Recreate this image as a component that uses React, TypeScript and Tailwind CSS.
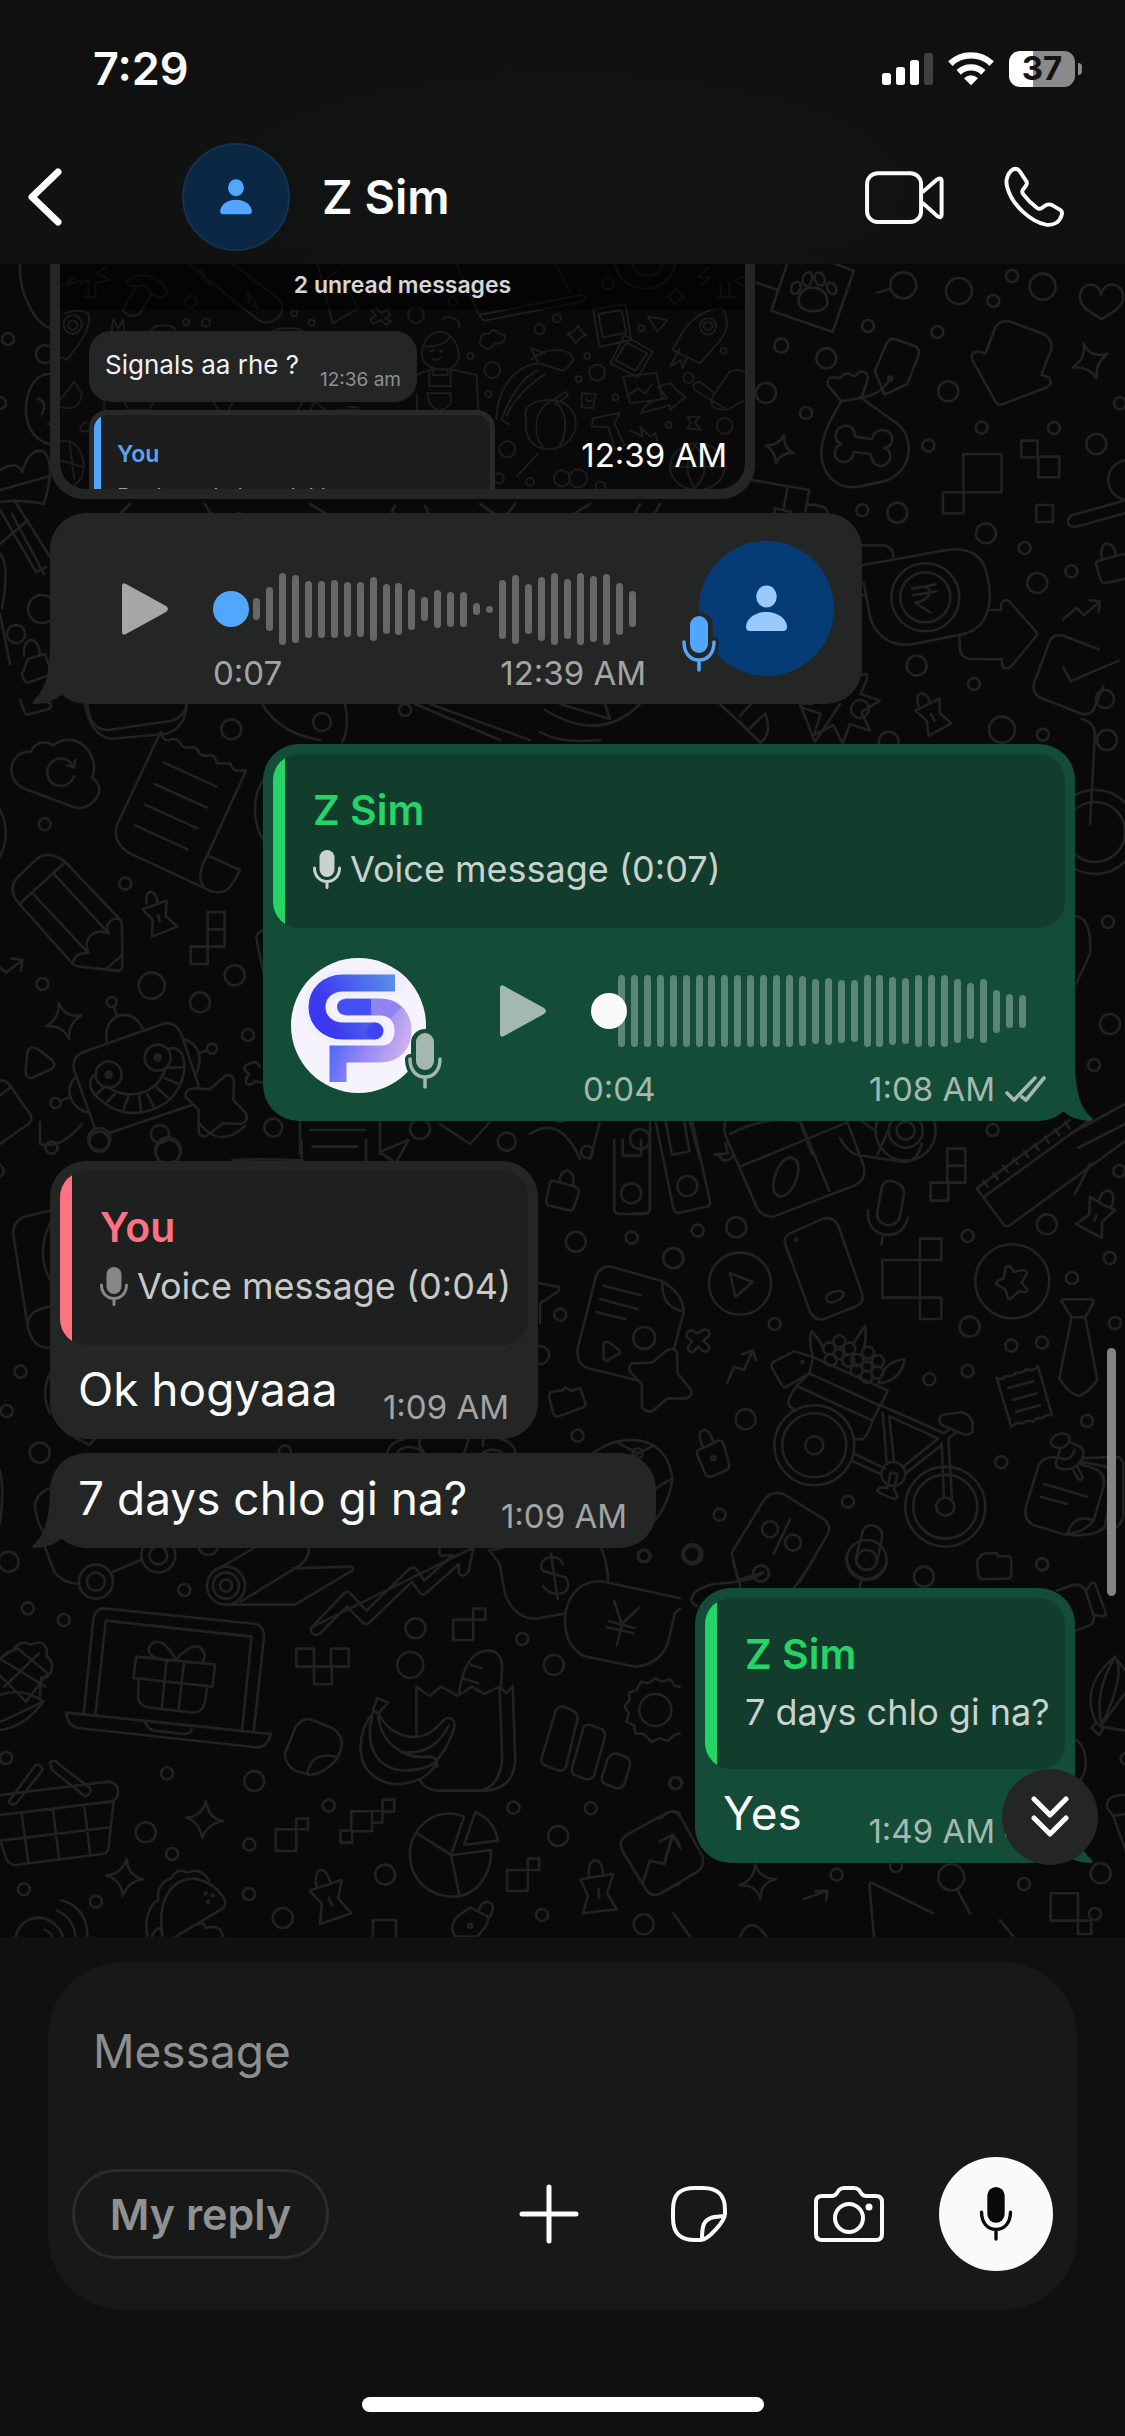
import React, { useState } from 'react';

type Dot = [number, number, number];

interface PatchData {
  x: number;
  y: number;
  sx: number;
  sy: number;
  dots: Dot[];
  paths: string[];
}

// Wallpaper doodles. Each patch has its own drawing grid, radii are in screen px.
const WALLPAPER: PatchData[] = [
  {
    x: 0, y: 700, sx: 0.3333, sy: 0.3333,
    dots: [
      [694, 88, 10], [134, 373, 6], [376, 551, 6], [127, 852, 6], [455, 857, 13], [704, 826, 10], [600, 907, 10],
      [335, 906, 5], [744, 1005, 6], [636, 1046, 5], [167, 1209, 5], [155, 1343, 6], [298, 1317, 11], [504, 1352, 13],
      [326, 1124, 13], [473, 1073, 13], [326, 1124, 3], [473, 1073, 3], [326, 1124, 1], [473, 1073, 1], [820, 1283, 9],
    ],
    paths: [
      'M78 268L222 322C262 334 306 292 296 258Q290 240 276 232C290 205 280 165 255 140C225 112 185 115 160 136C140 122 110 120 92 156C60 152 35 175 34 208C35 240 55 260 78 268Z',
      'M222 228A41 41 0 1 1 215 192M226 180L222 202L201 196',
      'M482 96L352 372Q335 425 385 458L630 572C680 590 695 560 720 510L622 466C590 520 595 560 632 574M622 466L738 212L720 212Q702 218 690 190Q668 192 650 188Q645 165 630 166Q608 172 598 158Q588 138 570 142Q548 148 538 125Q525 112 508 120Q490 125 482 96',
      'M492 188L650 260M464 252L621 323M435 314L592 385M406 376L563 448',
      'M58 612C30 580 32 550 60 525L112 475Q150 450 196 486L360 658Q366 665 366 680L367 800Q365 815 350 812L240 800Q220 798 212 785Z',
      'M58 612L196 486M98 580L266 760M162 522L326 700M218 790Q225 755 266 760C245 720 280 680 326 700C310 675 340 645 362 660M320 806L366 766',
      'M428 628L500 602L497 648L532 680L456 710L458 660ZM440 610C432 570 465 560 474 608M474 645L480 664',
      'M623 636h51v52h-51zM623 688h51v52h-51zM572 740h51v52h-51z',
      'M-10 792L18 818L68 780M34 776L68 780L62 812',
      'M176 908Q195 955 244 946Q205 970 207 1016Q188 975 137 979Q180 955 176 908Z',
      'M82 1058Q88 1035 112 1046L158 1082Q170 1098 152 1108L96 1134Q74 1136 77 1110Z',
      'M250 1056L495 970Q530 965 545 1005L597 1160M284 1283L222 1110Q215 1070 250 1056M325 1300L576 1215',
      'M320 1024C305 940 400 915 428 988M352 950L340 918M550 1017C595 1030 610 1070 590 1118M597 1060L622 1050M228 1132C190 1160 210 1225 264 1238M212 1192L182 1202',
      'M290 1120C255 1140 270 1180 310 1206C360 1250 440 1250 500 1206C545 1170 565 1110 545 1060Q530 1040 508 1046M320 1160C380 1200 470 1190 496 1105',
      'M288 1184L312 1162M316 1212L345 1182M368 1236L386 1186M424 1238L418 1188M462 1222L442 1182M502 1192L470 1162M536 1152L494 1134M552 1102L502 1103',
      'M590 1165L630 1168L675 1128Q702 1120 702 1145L700 1200L738 1240Q748 1268 720 1272L668 1270L620 1308Q596 1312 596 1290L596 1230L558 1192Q552 1165 590 1165Z',
      'M780 1100Q770 1080 752 1090Q725 1098 736 1112L748 1122Q735 1135 738 1150Q752 1160 765 1144L790 1148',
      'M-5 1145Q10 1135 25 1150L92 1245Q98 1262 85 1272L-5 1335M-5 1190L28 1165',
      'M262 10Q268 90 325 90L515 62Q555 50 560 10M60 0L75 40Q82 46 90 42L145 28Q156 22 152 10L110 0',
      'M-5 320Q40 400 -5 480M790 240C755 290 758 370 790 420M790 690Q765 700 770 720L790 815',
    ],
  },
  {
    x: 740, y: 260, sx: 0.3333, sy: 0.3333,
    dots: [
      [490, 76, 13], [657, 93, 13], [816, 48, 6], [760, 123, 6], [908, 80, 13], [384, 198, 6], [592, 216, 6], [124, 257, 7],
      [259, 295, 10], [78, 399, 10], [625, 394, 10], [198, 459, 6], [725, 503, 6], [942, 504, 6], [565, 557, 6], [1069, 552, 10],
      [1140, 430, 6], [367, 751, 6], [472, 758, 10], [738, 820, 10], [854, 864, 6], [994, 934, 6], [892, 969, 10],
      [530, 1217, 10], [702, 1272, 6], [786, 1409, 13], [909, 1424, 6], [1101, 1440, 10], [446, 1445, 10], [451, 356, 2],
      [556, 1012, 34], [556, 1012, 25], [1165, 660, 20],
    ],
    paths: [
      'M142 10L94 152L278 216L342 32L280 10M50 68L114 90',
      'M176 120C180 70 255 70 262 120C270 165 172 165 176 120Z',
      'M190 70C180 40 215 25 216 50C216 80 198 85 190 70ZM226 62C215 35 245 28 254 55C258 80 236 84 226 62ZM154 95C150 68 180 55 182 75C182 100 160 108 154 95ZM262 86C255 62 285 62 290 90C286 108 270 106 262 86Z',
      'M412 98L450 87',
      'M1085 178L1036 145C1000 110 1030 60 1068 78Q1082 88 1083 106Q1088 80 1108 74C1150 68 1165 120 1130 148Z',
      'M765 205Q778 178 808 184L905 220Q938 232 934 268L904 345Q935 350 932 368Q930 380 915 384L785 434Q772 436 766 424L698 302Q690 282 705 277Q720 272 736 282Z',
      'M1030 250Q1050 295 1102 282Q1065 310 1070 354Q1045 318 998 322Q1040 295 1030 250Z',
      'M440 250Q450 232 466 238L524 258Q540 266 536 284L502 372L434 404L404 334ZM362 412Q420 408 451 356',
      'M304 424L264 376Q258 350 285 352Q302 358 310 344Q325 335 336 346Q348 352 356 336Q385 330 383 360L364 414ZM304 424C270 480 242 530 244 590C252 655 300 690 358 680L440 662C520 630 525 530 470 490L364 414',
      'M346 530Q342 492 310 498C275 510 285 545 304 552C275 560 278 608 314 606Q338 602 342 576L392 582Q395 618 425 618C462 608 455 568 432 564C465 562 468 510 424 510Q400 514 396 538Z',
      'M132 525Q132 570 162 578Q118 580 108 610Q105 570 76 556Q112 560 132 525Z',
      'M670 582h115v115h-115zM609 697h62v63h-62zM844 542h49v50h-49zM895 590h63v62h-63zM889 735h50v51h-50z',
      'M35 660L208 690L196 755M142 684L130 750M206 734Q262 735 264 760M104 760V745L155 756',
      'M366 856H430Q462 860 460 896M366 916L620 870C700 858 735 900 742 950C760 1020 750 1110 660 1124L520 1152C440 1165 395 1110 388 1060Q375 985 370 968M366 1006H378',
      'M516 986L586 974M520 1006L590 994M550 980Q575 985 568 1002Q560 1022 525 1028L572 1058',
      'M752 1050H784Q780 1020 800 1020Q808 1022 815 1032L886 1112Q894 1122 886 1132L815 1218Q800 1232 790 1222Q784 1215 786 1198L690 1197Q660 1192 660 1165L658 1128',
      'M970 1078L1010 1043L1032 1066L1080 1024M1048 1020L1080 1024L1076 1056',
      'M1076 1168L965 1126Q942 1122 930 1142L882 1270Q876 1300 898 1312L1020 1360Q1048 1368 1060 1350L1090 1280M970 1222L992 1264L1136 1202',
      'M1160 720L995 766Q978 780 988 796Q995 802 1010 800L1160 758M1160 885L1150 882L1075 902Q1065 908 1070 920L1082 960Q1088 972 1105 968L1160 955M1086 895C1075 840 1120 835 1128 885',
      'M366 1245Q385 1235 380 1260L362 1302L420 1322L364 1356L390 1412L330 1392L308 1450L280 1396L222 1425L242 1362L180 1340Q185 1325 215 1332',
      'M526 1352L598 1316L600 1360L634 1390L566 1428L560 1382ZM536 1338C520 1298 552 1280 572 1330M572 1362L584 1382',
      'M0 1368L32 1334M0 1385L24 1410L76 1360Q98 1420 60 1450',
    ],
  },
  {
    x: 640, y: 1120, sx: 0.3333, sy: 0.3333,
    dots: [
      [173, 332, 6], [289, 322, 10], [100, 414, 10], [300, 491, 31], [404, 612, 6], [1058, 30, 6], [983, 348, 6],
      [1221, 313, 10], [1438, 153, 6], [1117, 484, 37], [1296, 474, 6], [1409, 414, 6], [1425, 609, 6], [989, 620, 10],
      [1114, 677, 6], [1206, 668, 6], [983, 753, 6], [868, 778, 6], [317, 898, 10], [1341, 903, 6], [1084, 1027, 6],
      [624, 1145, 6], [239, 1184, 6], [157, 1303, 10], [14, 1308, 6], [852, 1370, 10], [1206, 1333, 6], [142, 198, 10],
      [523, 976, 40], [523, 976, 32], [523, 976, 9], [916, 1160, 40], [916, 1160, 32], [916, 1160, 9], [760, 1062, 12],
      [390, 1228, 8], [459, 1268, 8], [363, 1360, 8], [797, 32, 17], [797, 32, 9], [797, 32, 30], [469, 359, 1],
      [487, 726, 1], [220, 1015, 2],
      [596, 703, 5], [568, 686, 6], [598, 664, 6], [628, 686, 6], [572, 720, 6], [625, 722, 6], [681, 740, 5], [652, 720, 6],
      [684, 698, 6], [714, 724, 6], [712, 758, 6], [680, 770, 6], [650, 752, 6],
    ],
    paths: [
      'M-20 280H15Q30 278 30 265V0M46 0L100 265Q103 280 118 278L200 260Q212 256 210 245L156 0M76 0L96 104L148 94L132 0',
      'M258 0Q248 25 258 50L345 250Q360 292 400 290L640 198Q680 182 672 140L620 0M300 140L620 8M480 0L568 212M256 70L264 100L224 104Q240 102 246 120Q270 125 278 108',
      'M400 190C410 130 445 95 470 122C490 160 450 240 415 228Q398 220 400 190ZM600 55Q630 105 660 106L790 126Q830 128 846 70M745 30L712 104M660 0L704 30',
      'M726 200Q738 175 765 186Q795 196 792 222L780 290Q770 318 740 315Q708 306 712 275ZM684 270C680 310 700 342 742 345Q790 345 804 293M728 346L724 373',
      'M455 338L550 296Q580 288 595 318L666 520Q674 545 650 558L555 596Q525 606 510 575L435 370Q430 348 455 338ZM560 540C550 520 600 505 610 518C616 535 570 560 560 540Z',
      'M270 460L338 486L286 531Z',
      'M922 86h54v51h-54zM922 137h54v51h-54zM872 188h53v54h-53zM727 420h113v113h-113zM840 356h64v64h-64zM840 533h64v64h-64z',
      'M1010 205L1290 0M1350 0L1030 232M1010 205L1092 315Q1100 322 1110 316L1460 60M1030 182L1043 200M1060 160L1073 178M1090 137L1103 155M1121 115L1134 133M1152 94L1165 112M1183 72L1196 90M1214 50L1227 68M1245 28L1258 46M1275 6L1288 24',
      'M1350 230L1390 255L1425 270L1386 306V354L1308 312L1348 284ZM1376 244C1390 190 1440 210 1412 264M1370 284L1362 302',
      'M1098 440Q1112 432 1120 455L1155 450Q1165 455 1158 466L1145 488L1164 510Q1162 520 1138 514L1120 528Q1110 542 1104 534L1096 508L1068 492Q1066 482 1090 476Z',
      'M1265 545Q1262 538 1275 538H1352Q1362 538 1360 548L1336 592H1295ZM1295 592L1258 775Q1285 820 1317 828Q1350 815 1372 778L1336 592',
      'M1070 774Q1090 782 1098 768Q1120 772 1128 758Q1145 762 1158 748Q1180 756 1194 738L1236 886Q1218 882 1208 894Q1190 892 1180 905Q1160 898 1150 910Q1130 905 1114 920ZM1105 804L1180 784M1118 840L1190 820M1128 876L1200 856',
      'M174 640Q188 630 194 628Q214 632 206 648L190 662L208 680Q210 696 190 694L174 680L158 698Q142 694 144 682L156 664L140 650Q138 630 158 632Z',
      'M261 790L282 740L312 750L338 692M306 703L338 692L349 722',
      'M172 992L235 962Q245 960 250 970L268 1035Q268 1045 260 1050L215 1070Q200 1072 195 1060L172 1005ZM188 978C160 925 205 910 218 962',
      'M518 710Q505 660 515 634Q545 665 550 690M640 672Q665 630 676 618Q680 660 670 690M715 790Q735 720 795 718Q780 785 715 790',
      'M395 742Q392 732 402 725L462 694L520 712L508 760L440 800Q430 805 425 795ZM520 712L744 812L698 902L470 798L508 760M508 760L722 858M470 798Q435 845 450 860L462 868M698 902Q680 955 665 958H645',
      'M722 856L912 940L932 926M898 900Q900 885 915 883L965 877Q995 885 998 910V935Q985 950 965 940L905 915ZM728 878L740 1024M748 890L762 1024M750 890L895 956L795 1036M905 975L800 1058M645 1002L735 1046M638 1024L722 1062M905 970L912 1132M925 955L936 1134M925 955L950 936',
      'M752 1058L742 1104Q712 1098 712 1112Q718 1122 765 1138Q780 1130 762 1110L772 1062Z',
      'M275 1298L372 1140Q395 1110 430 1122L555 1200Q575 1220 562 1245L480 1385M275 1298L296 1385M450 1198L402 1300M300 1378L370 1358',
      'M668 1235Q678 1210 705 1218Q730 1226 726 1255L710 1330Q700 1352 675 1349Q645 1342 648 1312ZM620 1305C618 1340 640 1372 680 1377Q725 1372 740 1328',
      'M1245 1012Q1205 1010 1195 1040L1158 1160Q1150 1200 1180 1215L1275 1244Q1330 1240 1362 1200L1392 1095Q1395 1055 1360 1045L1320 1032M1282 1242Q1300 1180 1362 1200M1320 1025L1400 1040Q1425 1060 1418 1090L1395 1220Q1370 1250 1290 1245M1330 1015L1430 1010Q1450 1015 1450 1035V1190Q1440 1230 1400 1225M1212 1092L1342 1130M1202 1130L1282 1152',
      'M1232 970C1235 940 1280 930 1290 955C1285 985 1250 995 1232 970ZM1262 985L1250 1020Q1240 1048 1275 1048C1320 1048 1345 1000 1320 980L1288 966M1256 1012Q1290 1030 1304 990M1296 1045L1314 1076Q1325 1085 1328 1072L1310 1035',
      'M1022 1310V1305L1040 1300H1070L1074 1310L1104 1308Q1114 1310 1114 1325V1365Q1112 1375 1102 1376L1030 1378Q1015 1376 1014 1362L1012 1325Q1012 1314 1022 1310Z',
    ],
  },
  {
    x: 0, y: 1140, sx: 0.4464, sy: 0.3333,
    dots: [
      [115, 23, 6], [222, 5, 10], [376, 35, 12], [46, 695, 6], [15, 813, 6], [89, 938, 10], [-5, 93, 6], [638, 935, 6],
      [1315, 36, 6], [1290, 305, 10], [1415, 293, 6], [1414, 160, 10], [1255, 524, 6], [1210, 645, 9], [1294, 887, 6],
      [1135, 5, 9], [1508, 355, 10], [1442, 1248, 6], [1550, 1243, 8], [1443, 594, 11], [1428, 940, 5],
    ],
    paths: [
      'M1376 0V205Q1376 222 1388 222H1445Q1456 220 1456 205V0M1395 0V47H1436V0',
      'M1240 122L1290 140Q1298 146 1296 160L1285 205Q1282 214 1272 210L1228 196Q1222 190 1224 176L1232 130Q1234 122 1240 122ZM1254 122C1255 80 1290 80 1284 136',
      'M1208 430L1250 440Q1256 446 1250 454L1210 490V550',
      'M1335 410Q1345 375 1370 380L1484 424Q1530 460 1532 515L1510 625M1484 424Q1480 500 1530 514M1335 410L1294 625Q1290 670 1315 684L1425 720M1352 437L1436 466M1344 477L1428 507M1336 516L1400 537M1352 610Q1360 600 1370 612L1388 632Q1392 640 1380 646L1360 662Q1350 660 1352 650Z',
      'M1420 670L1460 668L1495 630Q1516 620 1517 645L1518 700L1548 750Q1552 775 1530 776L1495 775L1460 815Q1436 815 1438 790V735L1410 692Q1408 670 1420 670Z',
      'M1232 756L1262 750L1266 742L1278 752L1300 745L1312 792Q1312 800 1300 805L1250 830Q1240 828 1238 815L1230 770Z',
      'M676 62V0M820 62V0M700 20H800M850 36L915 0L890 62M850 36L880 62M520 60Q600 55 680 62',
      'M868 935Q875 905 905 897M940 897V918L950 938M1082 897V918M1050 897L1040 938M1155 938Q1150 905 1120 897M890 938A30 28 0 0 1 945 938M1082 938A30 28 0 0 1 1125 938M1330 938C1400 870 1500 890 1506 1020C1500 1080 1480 1120 1468 1140M1428 940L1380 905M1428 940L1460 920M1428 940L1400 990M1468 1046L1500 1020',
      'M112 212L60 228Q28 240 30 285L62 560Q75 630 112 622M112 500Q60 510 62 560M112 250Q80 340 112 420M112 700Q90 760 112 820M150 880L200 915L212 897',
      'M0 990Q10 1050 0 1150M78 1100Q80 1060 112 1045M78 1100Q85 1160 100 1180',
    ],
  },
  {
    x: 0, y: 1540, sx: 0.4337, sy: 0.3333,
    dots: [
      [20, 65, 10], [64, 205, 6], [147, 240, 6], [425, 150, 6], [221, 125, 17], [221, 125, 9], [365, 46, 17], [365, 46, 9],
      [521, 137, 19], [521, 137, 13], [521, 137, 6], [958, 265, 10], [946, 375, 13], [1204, 297, 6], [1277, 375, 10],
      [1484, 48, 6], [14, 654, 6], [385, 700, 6], [586, 723, 10], [758, 797, 6], [336, 877, 10], [397, 942, 6],
      [575, 914, 6], [888, 1004, 10], [574, 1062, 6], [652, 1134, 10], [221, 1085, 6], [55, 1048, 6], [1184, 803, 6],
      [1362, 805, 6], [1287, 888, 10], [1250, 1125, 6], [1484, 1153, 10], [1557, 730, 6], [1511, 510, 16], [480, 15, 10],
      [474, 1060, 1], [490, 1066, 1], [480, 1085, 1], [1084, 1158, 2],
    ],
    paths: [
      'M103 20L125 95Q145 130 180 131M256 98L325 60',
      'M515 78L588 22M712 22Q715 60 680 85L555 185M676 85L808 80Q818 82 812 92L680 194H522',
      'M718 262L795 158Q802 150 808 160L845 212L945 85Q955 78 962 90L978 122L1044 45L1018 48Q1008 40 1015 22M1092 22L1080 95Q1070 115 1058 100L1058 72L982 160Q975 168 968 158L950 125L850 250Q845 256 838 250L800 200L738 280Q728 290 720 280Q714 272 718 262Z',
      'M1128 30L1152 72L1164 160Q1185 235 1235 236L1305 220M1385 22Q1400 60 1402 122M1130 30L1160 24M1270 40L1286 178M1298 72Q1290 45 1262 54Q1240 70 1252 92Q1290 108 1304 112Q1318 140 1300 158Q1270 170 1252 138',
      'M1568 175L1385 123Q1320 125 1304 215Q1295 310 1345 348L1465 380Q1520 375 1540 310L1556 220L1568 205M1416 184L1434 252L1474 202M1434 252L1422 316M1404 244L1464 264M1400 262L1460 280',
      'M193 522L215 240Q220 200 245 206L590 252Q612 260 608 300L585 574M220 524L244 242L580 290L558 572',
      'M153 518L625 582Q615 625 590 622L185 565Q155 560 153 518ZM335 550Q345 570 355 572L425 582Q440 580 442 566',
      'M314 350L496 374L490 440L308 414ZM384 362L373 504M424 368L412 508M320 416L318 470Q320 495 340 502L445 518Q465 518 472 490L478 440M405 360Q350 365 342 330Q350 295 375 310Q395 330 405 360Q440 310 460 322Q480 340 466 368',
      'M683 326h41v54h-41zM763 326h41v54h-41zM724 380h41v53h-41zM1045 239h46v62h-46zM1091 206h28v33h-28z',
      'M636 868h47v65h-47zM683 836h27v32h-27zM810 814h48v60h-48zM882 779h27v36h-27zM858 814h24v34h-24zM785 872h27v36h-27zM1169 990h48v63h-48zM1217 956h26v34h-26zM860 1190V1140h53v50',
      'M-5 360L30 330Q50 295 70 315Q100 295 108 330V350Q125 365 118 395Q108 420 95 412L92 470M0 360Q15 330 36 330M-5 400L60 485M5 360L105 440M40 325L110 400M60 485L110 400M10 440L90 340M0 570Q60 560 100 484Q50 440 0 465M0 545Q30 530 100 484',
      'M682 560Q700 530 720 540L768 565Q792 590 788 620L778 655Q750 700 715 705L680 692Q655 670 657 640ZM708 700Q720 630 778 652',
      'M960 585V440L990 468L1018 440L1055 468L1088 440L1116 462L1152 440L1168 460L1182 438L1188 660Q1185 745 1120 752H1010Q980 750 968 720M1152 440L1158 660Q1150 740 1110 752M1058 462Q1070 350 1110 335Q1155 320 1158 380L1155 442M1085 374L1110 385M1070 416L1102 430',
      'M870 474L895 488L872 520L860 512ZM862 515C820 580 820 680 870 715C920 755 990 720 1008 665M872 520C900 590 960 610 1000 570Q1020 545 1028 535Q1050 530 1048 560Q1035 620 1005 665M858 530C840 620 870 690 935 692Q980 690 1002 668M872 530C880 610 930 660 990 650Q1010 650 1008 680M925 635Q1000 650 1035 555',
      'M1282 510Q1290 495 1305 502L1325 515Q1335 525 1330 545L1305 680Q1300 695 1288 692L1255 675Q1245 668 1250 650ZM1346 560Q1355 550 1368 558L1388 568Q1398 580 1394 595L1370 705Q1365 720 1350 718L1325 705Q1315 698 1320 680ZM1402 655Q1410 638 1425 642L1445 652Q1455 662 1452 680L1440 730Q1432 748 1420 744L1395 732Q1385 722 1388 710Z',
      'M1511 415L1525 425L1545 418L1556 438L1568 440M1511 415L1495 430L1478 425L1468 450L1450 458L1452 480L1440 498L1450 520L1444 545L1462 555L1465 580L1484 582L1502 606L1520 595L1540 602L1555 585L1568 580',
      'M82 675Q95 670 98 690L38 790Q28 800 20 785ZM115 668Q125 655 135 672L208 745Q212 765 195 768L120 690ZM0 765L250 725Q275 730 272 760Q270 780 255 785L0 825M262 785L250 925Q248 942 235 942L35 975Q20 975 14 955L0 900M0 902L255 862M50 820L65 965M122 808L136 955M194 795L208 945',
      'M475 783Q480 835 514 843Q480 850 466 894Q460 845 430 833Q465 830 475 783ZM292 956Q295 1008 330 1018Q295 1025 283 1068Q280 1020 245 1006Q282 1002 292 956Z',
      'M1070 830L1040 945L964 882M1070 830C1010 800 950 850 945 940C945 1020 990 1072 1050 1070C1100 1065 1135 1000 1132 930L1040 946L1060 1070M1096 816L1070 915L1148 902Q1140 840 1096 816Z',
      'M714 1052L788 1020L780 1075L810 1120L738 1152L742 1092ZM730 1042C720 980 752 970 762 1030M758 1074L765 1096M1338 1018L1414 1002L1400 1060L1422 1108L1344 1120L1356 1068ZM1358 1012C1352 945 1392 945 1390 1006M1380 1048L1382 1074',
      'M375 1190C360 1070 400 1015 450 1016Q500 1030 520 1085Q520 1100 508 1110L405 1190M375 1190Q368 1140 350 1190M340 1190C330 1130 350 1090 365 1080Q360 1030 395 1015Q410 980 430 998Q465 980 482 1022M455 1155Q470 1140 474 1165Q510 1150 514 1190',
      'M36 1190C50 1115 125 1115 145 1190M103 1170Q115 1175 122 1190M132 1112Q170 1135 174 1190M140 1080Q200 1100 202 1190',
      'M1045 1150Q1048 1135 1060 1125L1085 1102L1125 1130Q1130 1150 1100 1190H1050Q1038 1170 1045 1150ZM1105 1108Q1110 1085 1125 1085Q1145 1095 1130 1130',
      'M1568 820Q1550 808 1535 820L1445 885Q1425 900 1434 930L1490 1050Q1500 1070 1520 1062L1568 1030M1482 1030L1498 962L1532 972L1552 884M1520 906L1552 884L1566 910',
    ],
  },
  {
    x: 660, y: 1560, sx: 0.3333, sy: 0.3333,
    dots: [
      [792, 50, 10], [1147, 14, 6], [303, 41, 8], [48, 669, 6], [530, 944, 6], [708, 918, 6], [874, 952, 13], [1092, 972, 6],
      [1322, 940, 10], [620, 0, 10], [620, 0, 20], [1400, 596, 6],
    ],
    paths: [
      'M218 0L242 84M460 0L402 84M303 41Q280 65 160 72Q90 90 95 125Q100 135 112 138M604 62L598 84',
      'M1190 92L1240 74Q1270 72 1278 95L1302 170Q1302 190 1290 196L1248 212M1276 95L1295 68L1305 70L1338 160Q1335 170 1325 168L1302 165',
      'M1365 290C1290 350 1275 420 1310 490L1325 500L1395 512M1365 290L1395 330M1365 290C1320 370 1310 430 1325 495M1395 400L1325 495M1365 290Q1400 340 1325 495M1310 485L1295 505L1318 525L1332 502M1248 538C1285 570 1285 630 1260 662',
      'M1395 705Q1335 705 1342 745L1360 768L1400 880M1360 768L1395 762',
      'M0 775L28 756Q45 752 60 768L128 890Q135 920 112 935L0 1002M0 910L12 912L38 825L10 838M38 825L62 865',
      'M285 912Q298 955 348 958Q300 968 302 1018Q290 975 238 976Q285 958 285 912ZM430 1018L498 994M466 994L502 992L498 1020M642 1130L628 975Q632 965 642 972L820 1060M892 990L930 1060M1172 1000h82v82h-82zM1254 1082h40v40h-40zM40 1060L90 1130M240 1130Q270 1060 320 1130M1020 1080L1060 1130',
    ],
  },
  {
    x: 0, y: 264, sx: 1, sy: 1,
    dots: [
      [8, 75, 6], [45, 90, 9], [0, 139, 6], [16, 370, 9], [42, 345, 14], [1095, 568, 42], [1095, 568, 30], [1108, 658, 6],
      [1110, 760, 10], [1094, 801, 6], [322, 458, 9], [405, 446, 6], [860, 445, 9], [1105, 435, 9], [640, 875, 10], [160, 870, 9],
      [420, 865, 10], [560, 852, 6], [1095, 1650, 6],
    ],
    paths: [
      'M20 0C18 30 36 60 50 64M50 110C30 110 20 140 30 165Q38 178 50 180M38 135Q48 138 42 150M0 206Q18 196 22 208Q30 182 44 188Q56 200 44 240Q20 235 0 238M0 226L50 212M48 160Q60 158 66 168',
      'M0 246L36 308L46 303M14 236L52 296M0 280L28 256M12 250L44 310M130 240L120 250M205 240Q215 262 240 249M310 240L330 252M395 242A18 16 0 1 0 425 242M480 240L495 250M515 240L508 249M590 240L575 249M640 240L635 249M660 240L655 249',
      'M0 290Q10 300 2 344M28 395L45 390L52 410L30 418Q24 420 22 410ZM24 392C22 372 38 370 40 390M0 350L10 400',
      'M85 440Q90 470 110 475L165 470Q185 465 187 440M262 440Q280 470 320 476M345 440Q350 465 342 478M415 440L500 476M430 440L530 476M560 440L610 455L605 440M545 446Q600 480 640 440M720 440L760 478M840 440L815 478L800 440',
      'M1082 455Q1094 458 1095 470L1090 560M1076 652Q1092 655 1090 690L1076 720M1125 860L1078 884M1125 840L1070 870M1090 900L1075 930',
      'M540 468Q560 480 600 476M300 856V890M380 856V890M310 866H365M440 860L470 880L490 858M200 860Q220 885 245 862M600 858L590 895M530 870Q560 850 580 895M690 858L700 895M40 858V880Q60 886 82 860M730 870Q770 850 800 858L812 890',
    ],
  },
];

const SHOT_PATHS = [
  'M121 80L150 50L135 75L165 60M178 112V60L160 72M165 112H192M192 112V70L222 60L195 40L215 20M285 45C240 60 250 90 290 75C310 95 300 115 330 110C350 90 320 50 285 45ZM275 78L248 150Q260 180 282 160L305 100',
  'M380 12L520 180Q545 200 565 165Q575 140 560 115L470 12M405 25L425 75L408 60ZM498 95L520 145L502 130ZM640 12L670 190L722 145L690 60M640 80L680 30',
  'M965 165L1170 105Q1185 110 1175 125L975 182ZM965 165L920 12M1150 100L1120 12M1240 12C1250 110 1350 110 1360 12M1275 12C1280 60 1330 60 1335 12M1410 75L1430 55L1405 50L1430 20M1452 110V65M1470 110V65M1440 112H1485M1500 80L1480 60L1500 50',
  'M130 160Q160 145 178 160Q185 190 165 240L135 300L121 290M146 165A18 28 0 1 0 147 165M146 182A9 14 0 1 0 147 182M225 212L228 178L238 205L248 178L250 212M305 212C310 190 350 190 355 212M550 212C570 200 600 205 610 212',
  'M748 150L760 145L768 160L780 148L786 165L776 175L788 185L778 195L766 180L752 192L746 178L758 168Z',
  'M1195 148L1260 132L1272 240L1208 260ZM1206 162L1252 150L1262 218L1214 232ZM1258 225L1315 275L1285 352L1230 310ZM1262 248L1304 280L1280 332L1240 300ZM1305 170L1345 180L1325 215Z',
  'M1165 195Q1170 220 1182 225Q1166 232 1160 250Q1155 230 1142 222Q1160 215 1165 195ZM1362 82Q1366 105 1380 112Q1364 118 1360 136Q1354 115 1342 110Q1358 105 1362 82Z',
  'M1370 230Q1400 150 1455 145Q1480 200 1440 260L1410 310L1355 270ZM1426 175A16 24 0 1 0 1427 175M1426 186A9 12 0 1 0 1427 186M1370 265L1350 320L1372 300L1375 325L1385 290',
  'M850 290C850 190 920 190 925 290Q920 330 888 330Q855 320 850 290ZM890 180C900 160 930 175 925 205M855 260Q900 260 908 225M866 275L875 270M885 272L893 275M870 295Q880 305 890 290M872 328V345H902V328M838 345L868 328L908 328L960 345L964 450M865 328V378H908V328M860 400H908V430Q885 470 866 430ZM840 400V450',
  'M968 240Q970 215 985 222Q995 200 1005 222Q1022 222 1016 240Q1010 255 998 250Q985 275 975 262Q965 255 968 240ZM1070 300C1100 260 1150 260 1155 300C1130 350 1140 330 1085 310L1070 265L1100 280M1085 310C1030 320 1000 400 1000 480M1085 330Q1040 360 1010 480L1028 495M1100 340Q1040 400 1020 470',
  'M1060 480C1050 430 1090 410 1130 425C1170 450 1170 530 1130 560C1080 585 1055 540 1060 480ZM1108 425C1070 460 1075 540 1100 570M1120 425C1150 470 1140 540 1120 570M1110 425L1140 395L1145 405L1118 435M1085 580Q1060 620 1040 650',
  'M1255 350L1322 338L1335 418L1270 430ZM1262 410L1285 385L1300 400L1315 372M1325 380L1350 370L1380 412L1350 450V435L1292 460Q1300 420 1345 415ZM1400 390Q1390 370 1410 365L1440 400L1470 335Q1500 325 1500 340M1400 390L1465 450L1500 420M1440 400Q1420 450 1460 448',
  'M1172 400L1200 402L1195 445L1172 442ZM1180 415L1185 425L1195 420M1195 475L1250 458L1238 490L1258 555L1240 570L1225 500L1192 500ZM1268 510L1295 530L1290 500L1310 530L1320 520L1325 545M1385 470L1410 470L1400 488L1412 510L1385 505L1392 488Z',
  'M1350 620A55 70 0 1 0 1460 620A55 70 0 1 0 1350 620M1400 555Q1370 620 1400 685M1400 555Q1440 620 1400 685M1350 620H1460',
  'M121 440Q160 460 165 400L150 365L121 420M121 545C160 530 175 600 165 650Q150 690 121 685M121 600L165 620M140 545L150 660M175 485Q155 500 165 515L190 510M210 425V450M250 425L260 450H300L310 425M430 425L440 450M470 425L460 450M600 450L610 425M625 450L635 425L655 450M680 450H720Q730 440 700 440',
];
const SHOT_DOTS: Dot[] = [
  [385, 125, 6], [593, 160, 3], [375, 187, 3], [415, 188, 4], [628, 188, 3], [838, 165, 8], [912, 124, 4], [1225, 70, 6],
  [1122, 175, 4], [1087, 208, 5], [1292, 205, 3], [948, 288, 3], [992, 330, 8], [1183, 288, 3], [1166, 357, 3], [1203, 338, 8],
  [1387, 353, 5], [1458, 272, 3], [984, 402, 3], [1240, 412, 3], [1347, 495, 3], [1460, 497, 8], [1022, 568, 8],
  [1068, 665, 4], [1132, 655, 8], [1005, 655, 5], [1165, 655, 9], [1210, 680, 5],
];

// bar heights in px
const WAVE_IN = [22, 44, 72, 68, 57, 57, 58, 55, 55, 64, 50, 52, 41, 24, 38, 35, 35, 12, 7, 59, 69, 50, 64, 72, 60, 72, 66, 71, 52, 36];
const WAVE_OUT = [72, 72, 72, 72, 72, 72, 72, 72, 72, 72, 72, 72, 72, 72, 70, 65, 67, 63, 62, 72, 72, 68, 66, 72, 72, 72, 64, 56, 64, 43, 34, 33];

function Doodles() {
  return (
    <svg
      aria-hidden="true"
      viewBox="0 264 1125 1673"
      preserveAspectRatio="xMidYMin slice"
      className="absolute inset-0 h-full w-full fill-none stroke-[#222222] [&_*]:[vector-effect:non-scaling-stroke]"
      strokeWidth="2.6"
      strokeLinecap="round"
      strokeLinejoin="round"
    >
      {WALLPAPER.map((p, i) => (
        <g key={i} transform={`translate(${p.x} ${p.y}) scale(${p.sx} ${p.sy})`}>
          {p.paths.map((d, j) => <path key={j} d={d} />)}
          {p.dots.map(([cx, cy, r], j) => <ellipse key={j} cx={cx} cy={cy} rx={r / p.sx} ry={r / p.sy} />)}
        </g>
      ))}
    </svg>
  );
}

function Person({ className }: { className: string }) {
  return (
    <svg viewBox="0 0 135 135" className={className} fill="currentColor" aria-hidden="true">
      <ellipse cx="67.5" cy="55.5" rx="10.3" ry="11" />
      <path d="M47 86C47 78 56 71 67.5 71S88 78 88 86Q88 90 84 90H51Q47 90 47 86Z" />
    </svg>
  );
}

function Mic({ className, halo = '' }: { className: string; halo?: string }) {
  return (
    <svg viewBox="0 0 34 56" className={`overflow-visible ${className}`} fill="none" strokeLinecap="round" aria-hidden="true">
      {halo && (
        <g className={halo} strokeWidth="10">
          <rect x="8" y="1" width="18" height="36" rx="9" />
          <path d="M2 26C2 37 8 44 17 44S32 37 32 26" />
        </g>
      )}
      <rect x="8" y="0" width="18" height="37" rx="9" fill="currentColor" />
      <path d="M2 26C2 37 8 44 17 44S32 37 32 26M17 44V54" stroke="currentColor" strokeWidth="3.5" />
    </svg>
  );
}

function SmallMic({ className }: { className: string }) {
  return (
    <svg viewBox="0 0 28 39" className={`h-[39px] w-7 shrink-0 ${className}`} fill="none" strokeLinecap="round" aria-hidden="true">
      <rect x="6.5" y="0" width="15" height="27" rx="7.5" fill="currentColor" />
      <path d="M1.5 18C1.5 26 7 31.5 14 31.5S26.5 26 26.5 18M14 31.5V37.5" stroke="currentColor" strokeWidth="3" />
    </svg>
  );
}

function Ticks() {
  return (
    <svg viewBox="0 0 41 27" className="h-[27px] w-[41px] shrink-0" fill="none" stroke="currentColor" strokeWidth="3.6" strokeLinecap="round" strokeLinejoin="round" aria-label="Delivered">
      <path d="M2 17L9 24L30 2M17 21L21 24L39 2" />
    </svg>
  );
}

function Tail({ side }: { side: 'left' | 'right' }) {
  return (
    <svg
      viewBox="0 0 40 64"
      aria-hidden="true"
      className={side === 'left'
        ? 'absolute bottom-0 -left-[18px] h-16 w-10 fill-[#242626]'
        : 'absolute bottom-0 -right-[18px] h-16 w-10 -scale-x-100 fill-[#144d37]'}
    >
      <path d="M18 0C18 32 14 50 1 61Q-1 64 4 64Q20 63 29 55L40 50V0Z" />
    </svg>
  );
}

function PlayButton({ className }: { className: string }) {
  return (
    <button type="button" aria-label="Play voice message" className={className}>
      <svg viewBox="0 0 46 52" className="h-[52px] w-[46px]" fill="currentColor">
        <path d="M0 3Q0 -1 4 1L44 23Q48 26 44 29L4 51Q0 53 0 49Z" />
      </svg>
    </button>
  );
}

function Waveform({ bars, className, barClass, thumbClass }: { bars: number[]; className: string; barClass: string; thumbClass: string }) {
  const [pos, setPos] = useState(0);
  return (
    <div className={`relative h-[76px] ${className}`}>
      <div className="flex h-full items-center justify-between">
        {bars.map((h, i) => <span key={i} className={`w-[7px] rounded-full ${barClass}`} style={{ height: h }} />)}
      </div>
      <input
        type="range"
        aria-label="Playback position"
        min={0}
        max={100}
        value={pos}
        onChange={e => setPos(Number(e.target.value))}
        className={`absolute inset-0 h-full w-full appearance-none bg-transparent [&::-webkit-slider-thumb]:size-9 [&::-webkit-slider-thumb]:appearance-none [&::-webkit-slider-thumb]:rounded-full ${thumbClass}`}
      />
    </div>
  );
}

function Time({ children, className = 'text-[#a3a4a4]' }: { children: React.ReactNode; className?: string }) {
  return <span className={`flex items-center gap-[10px] text-[33px] leading-[44px] whitespace-nowrap ${className}`}>{children}</span>;
}

function Quote({ name, text, voice = false, tone }: { name: string; text: string; voice?: boolean; tone: 'green' | 'pink' }) {
  const green = tone === 'green';
  return (
    <blockquote className={`overflow-hidden rounded-[26px] ${green ? 'bg-[#123c2c]' : 'bg-[#1e201f]'}`}>
      <div className={`border-l-[12px] pt-[27px] pb-7 pl-7 ${green ? 'border-[#25d366]' : 'border-[#ff7282]'}`}>
        <p className={`text-[41px] leading-[58px] font-semibold ${green ? 'text-[#25d366]' : 'text-[#ff7282]'}`}>{name}</p>
        <p className={`flex items-center gap-[9px] text-[36px] whitespace-nowrap ${voice ? 'leading-[61px]' : 'leading-[58px]'} ${green ? 'text-[#c8d2ce]' : 'text-[#c8c9c8]'}`}>
          {voice && <SmallMic className={green ? '' : 'text-[#868887]'} />}
          {text}
        </p>
      </div>
    </blockquote>
  );
}

function StatusBar() {
  return (
    <div className="flex h-[138px] items-center justify-between pr-[43px] pl-[93px]">
      <time className="text-[45px] font-semibold">7:29</time>
      <div className="flex items-center">
        <svg viewBox="111 39 153 96" className="h-8 w-[51px]" fill="#fff" aria-label="Signal">
          <rect x="111" y="99" width="27" height="36" rx="8" />
          <rect x="153" y="81" width="27" height="54" rx="8" />
          <rect x="195" y="60" width="27" height="75" rx="8" />
          <rect x="237" y="39" width="27" height="96" rx="8" fill="#404040" />
        </svg>
        <svg viewBox="309 35 138 102" className="ml-[15px] h-[34px] w-[46px]" fill="none" stroke="#fff" strokeWidth="19" aria-label="Wi-Fi">
          <path d="M316 70A90 90 0 0 1 440 70M341 96A54 54 0 0 1 415 96" />
          <path d="M378 135L357 114Q378 95 399 114Z" fill="#fff" stroke="none" />
        </svg>
        <span className="ml-[15px] flex h-9 w-[66px] items-center justify-center rounded-[11px] bg-[linear-gradient(90deg,#fff_36%,#8a8a8a_36%)] text-[33px] font-bold text-[#141414]">37</span>
        <span className="ml-[3px] h-3 w-1 rounded-r-full bg-[#8a8a8a]" />
      </div>
    </div>
  );
}

function ChatHeader() {
  return (
    <header className="bg-[#101010] bg-[radial-gradient(ellipse_at_50%_70%,#111514,#101010_75%)] pb-[13px]">
      <StatusBar />
      <div className="mt-[5px] flex items-center pr-[60px] pl-7">
        <button type="button" aria-label="Back">
          <svg viewBox="0 0 34 58" className="h-[58px] w-[34px]" fill="none" stroke="#fafafa" strokeWidth="7" strokeLinecap="round" strokeLinejoin="round">
            <path d="M30 4L4 29L30 54" />
          </svg>
        </button>
        <div className="ml-[120px] rounded-full border-2 border-[#15324f] bg-[#0a2744]">
          <Person className="size-[104px] text-[#53a6fd]" />
        </div>
        <h1 className="ml-8 flex-1 text-[47px] font-semibold">Z Sim</h1>
        <div className="flex items-center gap-[60px]">
          <button type="button" aria-label="Video call">
            <svg viewBox="60 394 238 160" className="h-[53px] w-[79px]" fill="none" stroke="#fafafa" strokeWidth="12" strokeLinejoin="round">
              <rect x="66" y="401" width="163" height="147" rx="32" />
              <path d="M233 458L277 420Q291 412 291 424V526Q291 538 279 531L233 490" />
            </svg>
          </button>
          <button type="button" aria-label="Voice call">
            <svg viewBox="476 380 188 190" className="h-[62px] w-[61px]" fill="none" stroke="#fafafa" strokeWidth="12" strokeLinejoin="round">
              <path d="M498 394Q512 382 524 395L545 427Q549 433 543 441L534 453Q530 460 535 466C550 486 565 499 578 509Q585 514 592 509L604 501Q614 495 624 500L648 514Q658 520 653 533C645 556 625 563 605 560C560 552 500 500 486 445C480 425 486 405 498 394Z" />
            </svg>
          </button>
        </div>
      </div>
    </header>
  );
}

function ImageMessage() {
  return (
    <li className="relative w-[705px] rounded-b-[34px] bg-[#242626] px-[10px] pb-[10px]">
      <div className="relative h-[225px] overflow-hidden rounded-b-[26px] bg-[#090909]">
        <svg
          viewBox="121 12 1380 675"
          preserveAspectRatio="none"
          aria-hidden="true"
          className="absolute inset-0 h-full w-full fill-none stroke-[#1d1d1d] [&_*]:[vector-effect:non-scaling-stroke]"
          strokeWidth="2"
          strokeLinejoin="round"
        >
          {SHOT_PATHS.map((d, i) => <path key={i} d={d} />)}
          {SHOT_DOTS.map(([cx, cy, r], i) => <ellipse key={i} cx={cx} cy={cy} rx={r * 2} ry={r * 3} />)}
        </svg>
        <div className="relative">
          <p className="h-[46px] bg-black/50 text-center text-[23px] leading-[42px] font-semibold text-[#d6d6d6]">2 unread messages</p>
          <div className="mt-[21px] ml-[29px] flex h-[71px] w-[328px] items-end justify-between rounded-[22px] bg-[#242626] px-4">
            <span className="text-[26px] leading-[74px] text-[#f0f0f0]">Signals aa rhe ?</span>
            <span className="text-[19px] leading-[44px] text-[#8e8f8f]">12:36 am</span>
          </div>
          <div className="mt-2 ml-[29px] w-[406px] rounded-t-[18px] bg-[#292929] p-[5px]">
            <div className="overflow-hidden rounded-t-[14px] bg-[#1d1d1d]">
              <div className="border-l-[7px] border-[#53a6fd] pt-[23px] pl-4">
                <p className="text-[23px] leading-8 font-semibold text-[#5aa5f2]">You</p>
                <p className="h-10 pt-[10px] text-[22px] leading-8 text-[#a0a0a0]">Backtest kahan dekha</p>
              </div>
            </div>
          </div>
        </div>
        <span className="absolute right-[18px] bottom-3 text-[33px] leading-[44px] text-white">12:39 AM</span>
      </div>
    </li>
  );
}

function IncomingVoice() {
  return (
    <li className="relative mt-[14px] flex w-[812px] items-center rounded-[36px] bg-[#242626] pr-7 pl-[72px]">
      <Tail side="left" />
      <PlayButton className="text-[#a5a7a6]" />
      <div className="ml-[45px] w-[433px] pt-[58px] pb-[9px]">
        <Waveform bars={WAVE_IN} className="mr-[10px] pl-10" barClass="bg-[#666767]" thumbClass="[&::-webkit-slider-thumb]:bg-[#53a6fd]" />
        <div className="mt-1 flex justify-between">
          <Time>0:07</Time>
          <Time>12:39 AM</Time>
        </div>
      </div>
      <div className="relative ml-auto">
        <Person className="size-[135px] rounded-full bg-[#063c76] text-[#98c9ff]" />
        <Mic className="absolute top-[75px] -left-[17px] h-14 w-[34px] text-[#53a6fd]" halo="stroke-[#242626] fill-[#242626]" />
      </div>
    </li>
  );
}

function LogoAvatar() {
  return (
    <svg viewBox="0 0 135 135" className="size-[135px] rounded-full bg-[#f6f3fd]" fill="none" aria-label="Profile photo">
      <defs>
        <linearGradient id="logoS" gradientUnits="userSpaceOnUse" x1="16" y1="60" x2="104" y2="20">
          <stop offset="0.2" stopColor="#3c38f0" />
          <stop offset="1" stopColor="#5a90e8" />
        </linearGradient>
        <linearGradient id="logoP" gradientUnits="userSpaceOnUse" x1="40" y1="60" x2="118" y2="90">
          <stop offset="0.1" stopColor="#4c66fa" />
          <stop offset="0.55" stopColor="#9a8af2" />
          <stop offset="1" stopColor="#cdb4f0" />
        </linearGradient>
      </defs>
      <path d="M54 49H90C104 49 112 60 112 73S104 96 90 96H47V124" stroke="url(#logoP)" strokeWidth="17" />
      <path d="M104 25H52C36 25 26 36 26 49S36 73 52 73H84" stroke="#f1eeff" strokeWidth="26" strokeLinecap="round" />
      <path d="M54 49H84" stroke="#454ef5" strokeWidth="16" strokeLinecap="round" />
      <path d="M80 49H90C96 49 101 51 105 55" stroke="#8f84f2" strokeWidth="16" />
      <path d="M104 25H52C36 25 26 36 26 49S36 73 52 73H84" stroke="url(#logoS)" strokeWidth="17" />
      <circle cx="84" cy="73" r="8.5" fill="#4144f3" />
    </svg>
  );
}

function OutgoingVoice() {
  return (
    <li className="relative mt-10 w-[812px] self-end rounded-[36px] bg-[#144d37] p-[10px] text-[#a3b9af]">
      <Tail side="right" />
      <Quote name="Z Sim" text="Voice message (0:07)" voice tone="green" />
      <div className="relative flex items-start pr-[19px] pl-[18px]">
        <div className="relative mt-[30px]">
          <LogoAvatar />
          <Mic className="absolute top-[75px] left-[117px] h-14 w-[34px]" halo="stroke-[#144d37] fill-[#144d37]" />
        </div>
        <PlayButton className="mt-[57px] ml-[74px]" />
        <div className="ml-[37px] flex-1 pt-[45px]">
          <Waveform bars={WAVE_OUT} className="mr-5 ml-2 pl-[27px]" barClass="bg-[#5b8574]" thumbClass="[&::-webkit-slider-thumb]:bg-[#fafafa]" />
          <div className="mt-[18px] flex justify-between">
            <Time className="">0:04</Time>
            <Time className="">1:08 AM<Ticks /></Time>
          </div>
        </div>
      </div>
    </li>
  );
}

function MessageComposer() {
  const [text, setText] = useState('');
  return (
    <footer className="bg-[#101010] px-12 pt-[25px] pb-6">
      <form className="rounded-[75px] bg-[#171918] px-6 pt-[56px] pb-[39px]" onSubmit={e => e.preventDefault()}>
        <input
          type="text"
          aria-label="Message"
          placeholder="Message"
          value={text}
          onChange={e => setText(e.target.value)}
          className="block h-[66px] w-full bg-transparent px-[21px] text-[46px] text-white outline-none placeholder:text-[#8f8d8d]"
        />
        <div className="mt-[73px] flex items-center">
          <button type="button" className="h-[90px] w-[257px] rounded-full border-[3px] border-[#2b2d2c] text-[43px] font-semibold text-[#929191]">My reply</button>
          <div className="mr-[33px] ml-auto flex gap-9 text-[#fafafa]">
            <button type="button" aria-label="Attach" className="flex size-[114px] items-center justify-center">
              <svg viewBox="0 0 60 60" className="size-[60px]" stroke="currentColor" strokeWidth="5" strokeLinecap="round"><path d="M30 3V57M3 30H57" /></svg>
            </button>
            <button type="button" aria-label="Stickers" className="flex size-[114px] items-center justify-center">
              <svg viewBox="0 0 56 56" className="size-14" fill="none" stroke="currentColor" strokeWidth="4" strokeLinejoin="round">
                <path d="M30 54H24C8 54 2 46 2 32V24C2 8 9 2 24 2H32C47 2 54 9 54 24V28C54 35 37 54 30 54ZM31 53C31 45 31 42 33 38C36 31 43 31 53 30" />
              </svg>
            </button>
            <button type="button" aria-label="Camera" className="flex size-[114px] items-center justify-center">
              <svg viewBox="0 0 70 56" className="h-14 w-[70px]" fill="none" stroke="currentColor" strokeWidth="4" strokeLinejoin="round">
                <path d="M8 10H18Q21 10 23 7L25 4Q27 2 30 2H40Q43 2 45 4L47 7Q49 10 52 10H62Q68 10 68 16V48Q68 54 62 54H8Q2 54 2 48V16Q2 10 8 10Z" />
                <circle cx="35" cy="32" r="14" />
                <circle cx="55" cy="21" r="3.5" fill="currentColor" stroke="none" />
              </svg>
            </button>
          </div>
          <button type="button" aria-label="Record voice message" className="flex size-[114px] items-center justify-center rounded-full bg-[#fafafa]">
            <Mic className="h-[54px] w-[34px] text-[#0a0a0a]" />
          </button>
        </div>
      </form>
      <div className="mx-auto mt-[87px] h-[15px] w-[402px] rounded-full bg-white" />
    </footer>
  );
}

export default function App() {
  return (
    <div className="flex min-h-screen flex-col bg-[#101010] font-['Inter',sans-serif] text-[#fafafa]">
      <ChatHeader />
      <main className="relative flex-1 overflow-hidden bg-[#090909]">
        <Doodles />
        <ul className="relative flex flex-col px-[50px] pb-[74px]">
          <ImageMessage />
          <IncomingVoice />
          <OutgoingVoice />
          <li className="relative mt-10 w-[488px] rounded-[36px] bg-[#242626] p-[10px]">
            <Quote name="You" text="Voice message (0:04)" voice tone="pink" />
            <div className="flex items-end justify-between pr-[19px] pl-[18px]">
              <p className="pt-[13px] pb-[9px] text-[46px] leading-[62px]">Ok hogyaaa</p>
              <Time>1:09 AM</Time>
            </div>
          </li>
          <li className="relative mt-[14px] w-[606px] rounded-[36px] bg-[#242626] p-[10px]">
            <Tail side="left" />
            <div className="relative flex items-end justify-between pr-[19px] pl-[18px]">
              <p className="pt-1 pb-[9px] text-[46px] leading-[62px]">7 days chlo gi na?</p>
              <Time>1:09 AM</Time>
            </div>
          </li>
          <li className="relative mt-10 w-[380px] self-end rounded-[36px] bg-[#144d37] p-[10px]">
            <Tail side="right" />
            <Quote name="Z Sim" text="7 days chlo gi na?" tone="green" />
            <div className="relative flex items-end justify-between pr-[19px] pl-[18px]">
              <p className="pt-[13px] pb-[9px] text-[46px] leading-[62px]">Yes</p>
              <Time className="text-[#a3b9af]">1:49 AM<Ticks /></Time>
            </div>
          </li>
        </ul>
        <button type="button" aria-label="Scroll to latest" className="absolute right-[27px] bottom-[72px] flex size-24 items-center justify-center rounded-full bg-[#242626]">
          <svg viewBox="0 0 38 42" className="h-[42px] w-[38px]" fill="none" stroke="#fff" strokeWidth="5" strokeLinecap="round" strokeLinejoin="round">
            <path d="M3 3L19 19L35 3M3 22L19 38L35 22" />
          </svg>
        </button>
        <div className="absolute top-[1084px] right-[9px] h-[248px] w-[9px] rounded-full bg-[#848484]" />
      </main>
      <MessageComposer />
    </div>
  );
}
